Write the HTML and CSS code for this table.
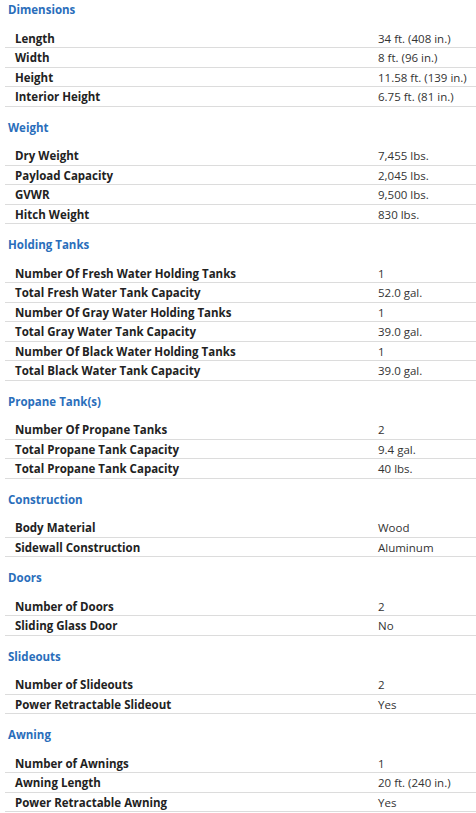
FILE: index.html
```html
<!DOCTYPE html>
<html lang="en">
<head>
    <meta charset="UTF-8">
    <meta name="viewport" content="width=device-width, initial-scale=1.0">
    <title>Specifications</title>
    <link rel="stylesheet" href="styles.css">
</head>
<body>
    <div class="specs">
        <div class="spec-section">
            <h3>Dimensions</h3>
            <table>
                <tr><td class="label">Length</td><td class="value">34 ft. (408 in.)</td></tr>
                <tr><td class="label">Width</td><td class="value">8 ft. (96 in.)</td></tr>
                <tr><td class="label">Height</td><td class="value">11.58 ft. (139 in.)</td></tr>
                <tr><td class="label">Interior Height</td><td class="value">6.75 ft. (81 in.)</td></tr>
            </table>
        </div>
        <div class="spec-section">
            <h3>Weight</h3>
            <table>
                <tr><td class="label">Dry Weight</td><td class="value">7,455 lbs.</td></tr>
                <tr><td class="label">Payload Capacity</td><td class="value">2,045 lbs.</td></tr>
                <tr><td class="label">GVWR</td><td class="value">9,500 lbs.</td></tr>
                <tr><td class="label">Hitch Weight</td><td class="value">830 lbs.</td></tr>
            </table>
        </div>
        <div class="spec-section">
            <h3>Holding Tanks</h3>
            <table>
                <tr><td class="label">Number Of Fresh Water Holding Tanks</td><td class="value">1</td></tr>
                <tr><td class="label">Total Fresh Water Tank Capacity</td><td class="value">52.0 gal.</td></tr>
                <tr><td class="label">Number Of Gray Water Holding Tanks</td><td class="value">1</td></tr>
                <tr><td class="label">Total Gray Water Tank Capacity</td><td class="value">39.0 gal.</td></tr>
                <tr><td class="label">Number Of Black Water Holding Tanks</td><td class="value">1</td></tr>
                <tr><td class="label">Total Black Water Tank Capacity</td><td class="value">39.0 gal.</td></tr>
            </table>
        </div>
        <div class="spec-section">
            <h3>Propane Tank(s)</h3>
            <table>
                <tr><td class="label">Number Of Propane Tanks</td><td class="value">2</td></tr>
                <tr><td class="label">Total Propane Tank Capacity</td><td class="value">9.4 gal.</td></tr>
                <tr><td class="label">Total Propane Tank Capacity</td><td class="value">40 lbs.</td></tr>
            </table>
        </div>
        <div class="spec-section">
            <h3>Construction</h3>
            <table>
                <tr><td class="label">Body Material</td><td class="value">Wood</td></tr>
                <tr><td class="label">Sidewall Construction</td><td class="value">Aluminum</td></tr>
            </table>
        </div>
        <div class="spec-section">
            <h3>Doors</h3>
            <table>
                <tr><td class="label">Number of Doors</td><td class="value">2</td></tr>
                <tr><td class="label">Sliding Glass Door</td><td class="value">No</td></tr>
            </table>
        </div>
        <div class="spec-section">
            <h3>Slideouts</h3>
            <table>
                <tr><td class="label">Number of Slideouts</td><td class="value">2</td></tr>
                <tr><td class="label">Power Retractable Slideout</td><td class="value">Yes</td></tr>
            </table>
        </div>
        <div class="spec-section">
            <h3>Awning</h3>
            <table>
                <tr><td class="label">Number of Awnings</td><td class="value">1</td></tr>
                <tr><td class="label">Awning Length</td><td class="value">20 ft. (240 in.)</td></tr>
                <tr><td class="label">Power Retractable Awning</td><td class="value">Yes</td></tr>
            </table>
        </div>
    </div>
</body>
</html>
```

FILE: styles.css
```css
body {
    margin: 0;
    font-family: "Open Sans", "Noto Sans", Arial, sans-serif;
    font-size: 11.5px;
    color: #333;
    background-color: #fff;
}
.spec-section {
    margin-bottom: 11px;
}
.spec-section h3 {
    margin: 0 0 8.5px 8px;
    font-size: 11.5px;
    line-height: 20px;
    font-weight: bold;
    color: #2a6ebb;
}
.spec-section table {
    margin-left: 5px;
    width: 471px;
    border-collapse: collapse;
    table-layout: fixed;
}
.spec-section td {
    padding: 1px 0 0 0;
    height: 17.5px;
    line-height: 17.5px;
    border-bottom: 1px solid #dcdcdc;
    white-space: nowrap;
}
.spec-section td.label {
    width: 363px;
    padding-left: 10px;
    font-weight: bold;
    color: #222;
}
.spec-section td.value {
    color: #333;
}
```
